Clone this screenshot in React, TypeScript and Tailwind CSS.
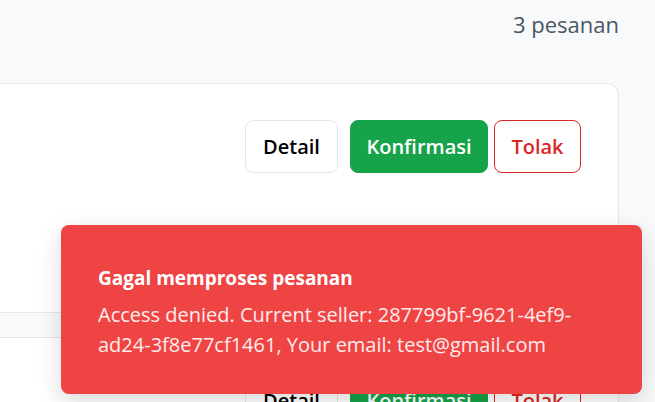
import React from "react";

function OrderCard() {
  return (
    <div className="-ml-[24px] h-[230px] rounded-xl border border-[#e5e7eb] bg-white pt-[36px] pr-[37px]">
      <div className="flex justify-end">
        <button className="mr-[12px] flex h-[53px] w-[93px] items-center justify-center rounded-lg border border-[#e5e7eb] bg-white text-[20px] font-semibold text-black">
          Detail
        </button>
        <button className="mr-[6px] flex h-[53px] w-[138px] items-center justify-center rounded-lg border border-[#16a34a] bg-[#16a34a] text-[20px] font-semibold text-white">
          Konfirmasi
        </button>
        <button className="flex h-[53px] w-[87px] items-center justify-center rounded-lg border border-[#dc2626] bg-white text-[20px] font-semibold text-[#dc2626]">
          Tolak
        </button>
      </div>
    </div>
  );
}

export default function App() {
  return (
    <div
      className="relative h-[402px] w-[655px] overflow-hidden bg-[#f8f9fb]"
      style={{ fontFamily: '"Open Sans", "Noto Sans", sans-serif' }}
    >
      <div className="pr-[36px]">
        <div className="flex h-[48px] items-center justify-end">
          <span className="text-[22px] text-[#4b5563]">3 pesanan</span>
        </div>
        <div className="mt-[35px] flex flex-col gap-[24px]">
          <OrderCard />
          <OrderCard />
        </div>
      </div>

      <div className="absolute right-[13px] bottom-[8px] h-[169px] w-[581px] rounded-lg bg-[#ef4444] pt-[39px] pl-[37px] pr-[20px] shadow-[0_8px_24px_rgba(0,0,0,0.15)]">
        <div className="text-[19px] font-bold leading-[28px] text-white">
          Gagal memproses pesanan
        </div>
        <div className="mt-[8px] text-[20px] leading-[30px] text-white/90">
          Access denied. Current seller: 287799bf-9621-4ef9-
          <br />
          ad24-3f8e77cf1461, Your email: test@gmail.com
        </div>
      </div>
    </div>
  );
}
